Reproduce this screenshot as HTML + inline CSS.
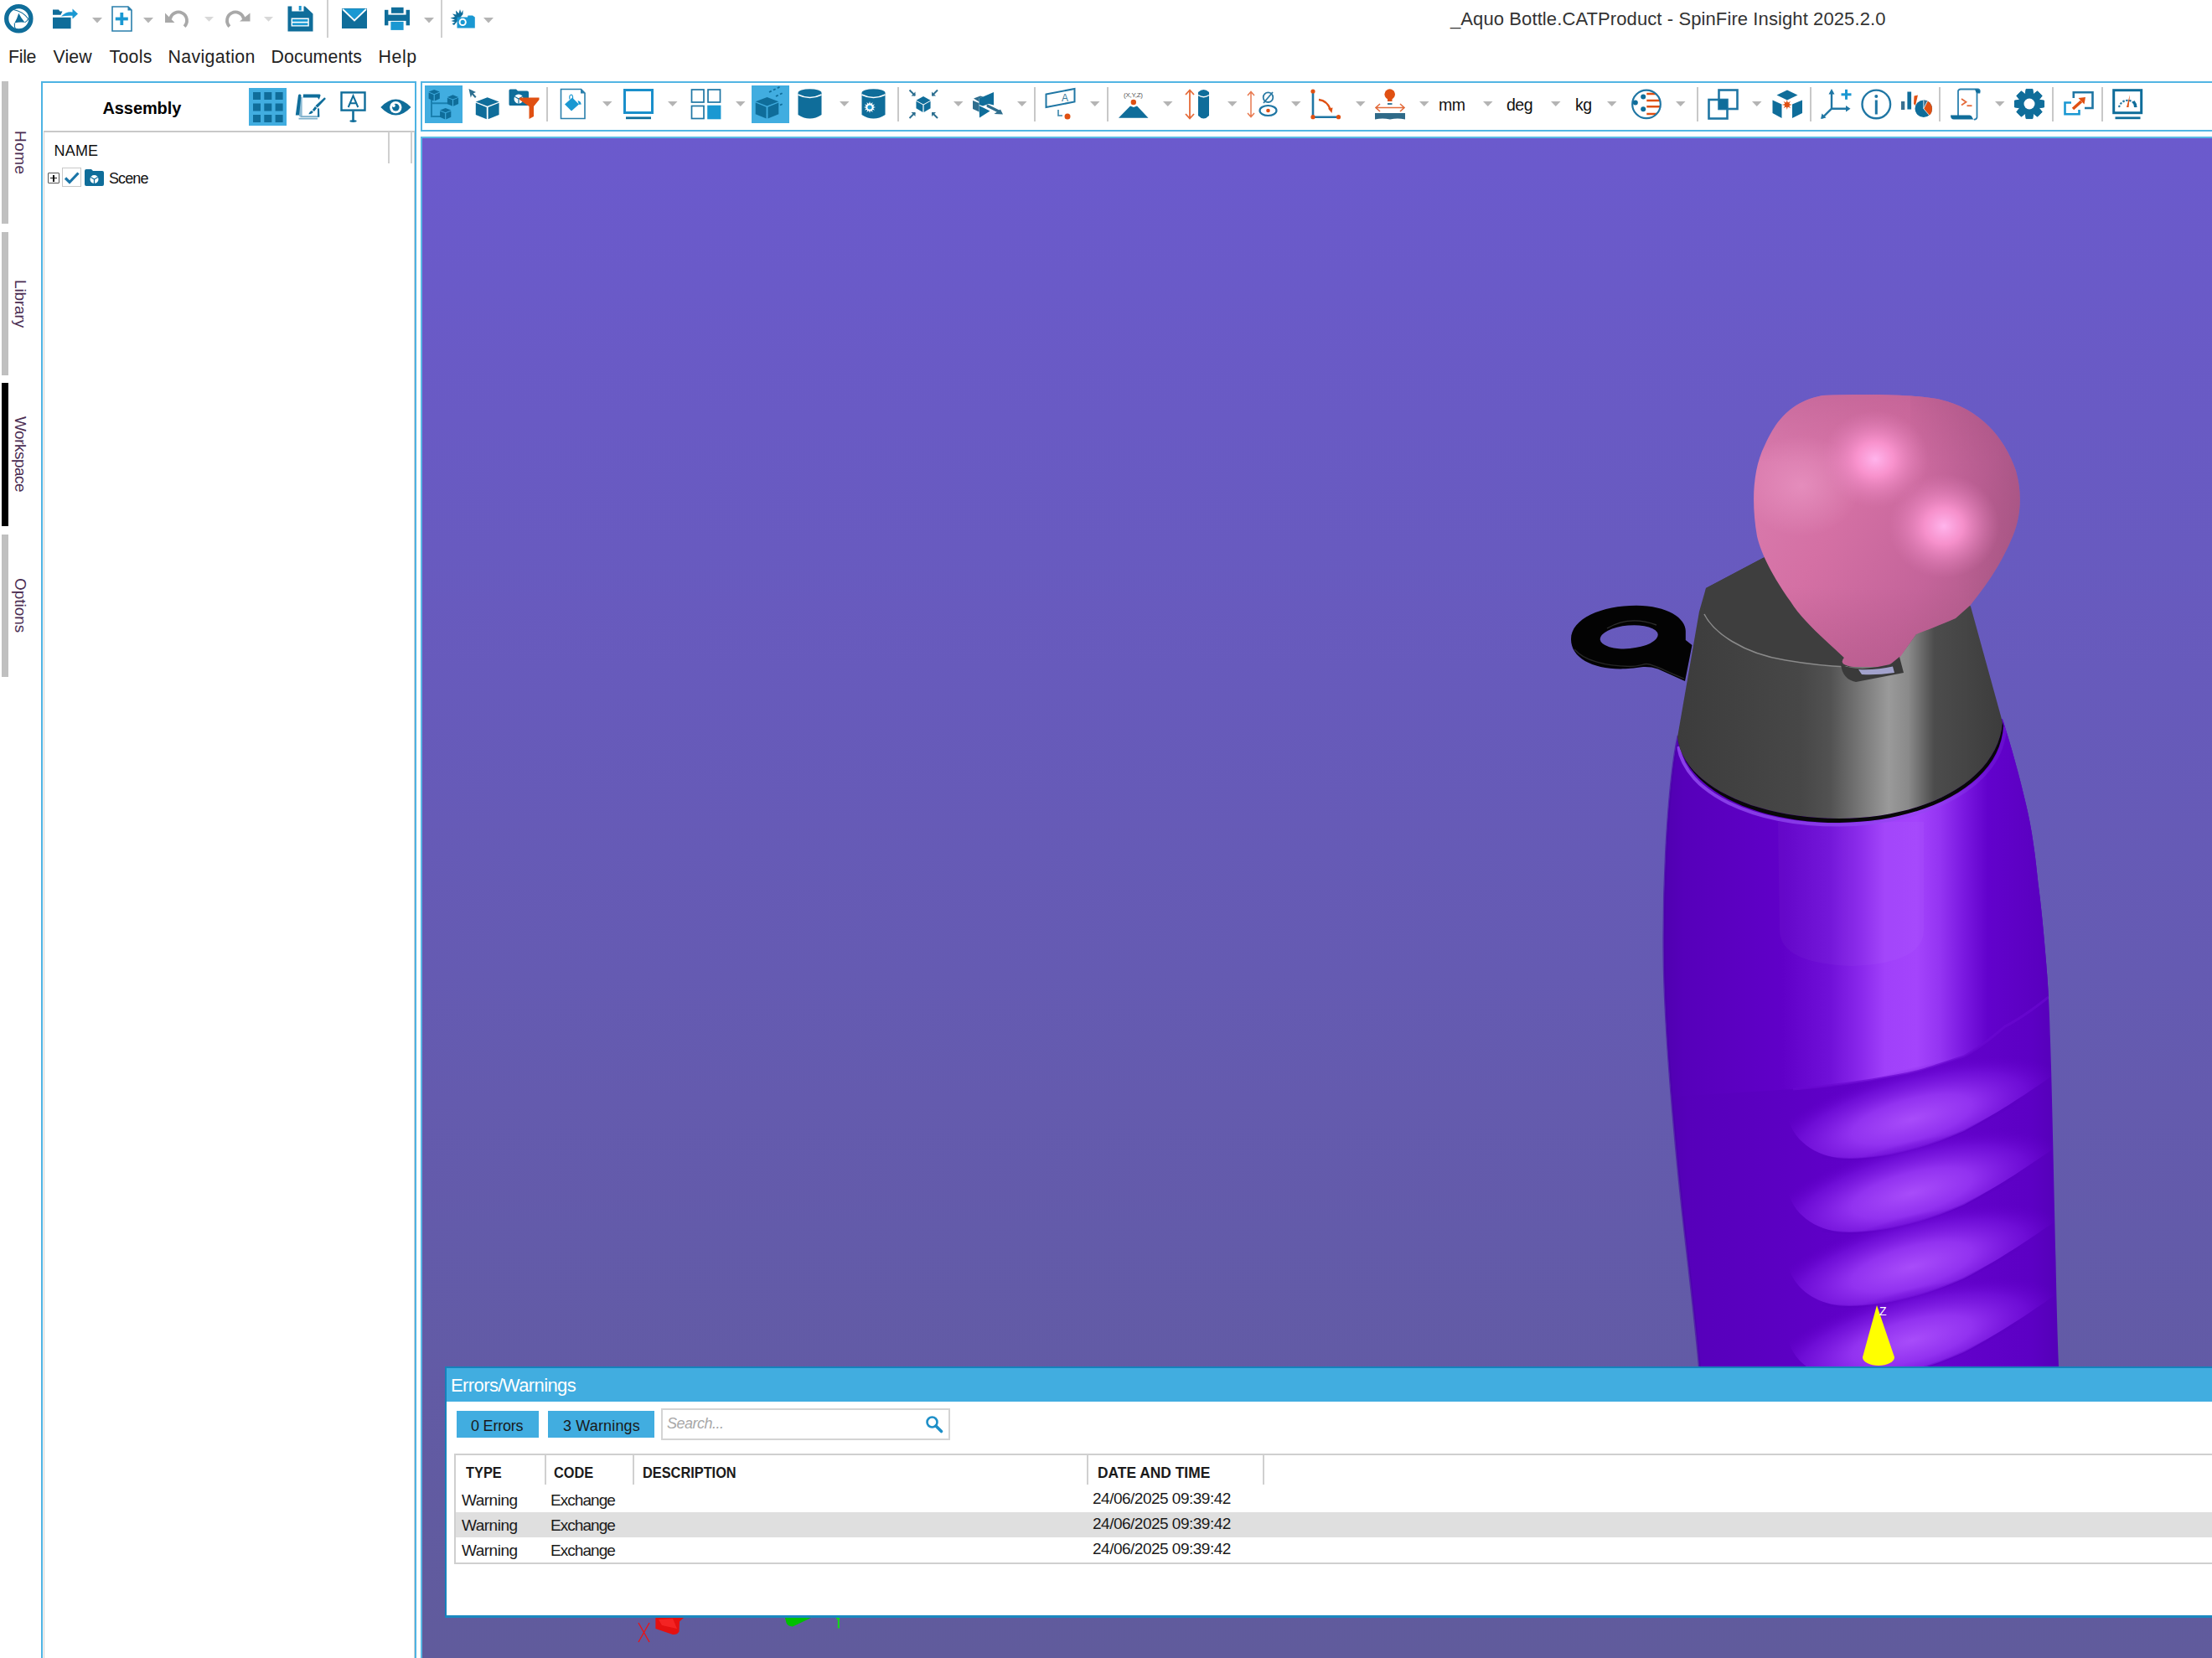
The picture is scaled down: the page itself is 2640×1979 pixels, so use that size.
<!DOCTYPE html>
<html><head><meta charset="utf-8">
<style>
*{margin:0;padding:0;box-sizing:border-box}
html,body{width:2640px;height:1979px;overflow:hidden;background:#fff;font-family:"Liberation Sans",sans-serif;color:#1a1a1a}
.a{position:absolute}
svg{overflow:visible}
.menu{font-size:21px;top:56px;line-height:24px;color:#111}
.title{font-size:22px;left:1732px;top:8px;line-height:30px;color:#333}
.tab{left:2px;width:8px;background:#c0c0c0}
.tabt{font-size:18px;color:#3a1030;transform-origin:0 0;transform:rotate(90deg);white-space:nowrap;line-height:20px}
#panel{left:49px;top:97px;width:448px;height:1900px;border:2px solid #4db3e3;border-bottom:none}
#tb{left:502px;top:97px;width:2200px;height:60px;border:2px solid #52b5e3;border-right:none}
#vp{left:502px;top:163px;width:2200px;height:1816px;border:2px solid #5ab8e4;border-right:none;border-bottom:none;background:linear-gradient(#6b5acd,#605b9c)}
#err{left:531px;top:1631px;width:2200px;height:300px;background:#fff;border-left:2px solid #1582bb;border-top:2px solid #1582bb;border-bottom:3px solid #1a88c0}
#errt{left:0;top:0;width:100%;height:40px;background:#41ade0}
.btn{background:#41ade0;color:#111;font-size:19px;text-align:center;line-height:32px;height:32px}
.t{line-height:1;white-space:nowrap;color:#1a1a1a}
.th{font-size:19px;color:#111;top:1752px;line-height:20px}
.td{font-size:18px;color:#111;line-height:20px}
</style></head><body>

<!-- quick access toolbar -->
<svg class="a" style="left:4px;top:4px" width="37" height="37" viewBox="0 0 37 37">
<circle cx="18.3" cy="18.2" r="14.6" fill="none" stroke="#0f6d9a" stroke-width="5.3"/>
<path d="M18.3 11.8 Q16.2 19 13.3 23.6 Q19.5 21.8 25.6 22.8 Q21 17.5 18.3 11.8 Z" fill="#0f6d9a"/>
<path d="M12.1 7.5 Q23 9.5 29.8 18.5" fill="none" stroke="#0f6d9a" stroke-width="1.1"/>
<path d="M25.6 22.8 Q28.5 21.5 30 18" fill="none" stroke="#0f6d9a" stroke-width="1.1"/>
<path d="M13.3 23.6 Q13 28 14.5 30.5" fill="none" stroke="#0f6d9a" stroke-width="1.1"/>
</svg>
<svg class="a" style="left:62px;top:9px" width="33" height="27" viewBox="0 0 33 27">
<path d="M1 2.5 L8 2.5 L9.5 4.5 L12.5 4.5 L10.5 8.8 L1 8.8 Z" fill="#0f6d9a"/>
<rect x="1" y="11.8" width="21.6" height="13.4" fill="#0f6d9a"/>
<path d="M11 10.5 Q17 4.5 24.5 5.5 L24.5 1.5 L31 7.5 L24.5 13.5 L24.5 9.8 Q17 9.5 11 10.5 Z" fill="#1a98d2"/>
</svg>
<svg class="a" style="left:109.5px;top:20.8px" width="12" height="6.5" viewBox="0 0 12 6.5"><path d="M0 0 L12 0 L6.0 6.5 Z" fill="#b4b4b4"/></svg>
<svg class="a" style="left:133px;top:7px" width="25" height="31" viewBox="0 0 25 31">
<path d="M1 1 L20 1 L24 5 L24 30 L1 30 Z" fill="none" stroke="#2a7fac" stroke-width="1.6"/>
<path d="M19.5 0.5 L24.5 5.5 L19.5 5.5 Z" fill="#2a7fac"/>
<rect x="10.4" y="8" width="3.8" height="15" fill="#1a98d2"/><rect x="4.8" y="13.6" width="15" height="3.8" fill="#1a98d2"/>
</svg>
<svg class="a" style="left:171px;top:20.8px" width="12" height="6.5" viewBox="0 0 12 6.5"><path d="M0 0 L12 0 L6.0 6.5 Z" fill="#b4b4b4"/></svg>
<svg class="a" style="left:195px;top:11px;overflow:visible" width="32" height="23" viewBox="0 0 32 23">
<path d="M8.15 11.76 A10 10 0 1 1 25.07 20.57" fill="none" stroke="#a8a8a8" stroke-width="3.8"/>
<path d="M2 4.5 L2 16 L13.5 16 Z" fill="#a8a8a8"/>
</svg>
<svg class="a" style="left:243.5px;top:19.8px" width="11" height="5.8" viewBox="0 0 11 5.8"><path d="M0 0 L11 0 L5.5 5.8 Z" fill="#d8d8d8"/></svg>
<svg class="a" style="left:268px;top:11px;overflow:visible" width="32" height="23" viewBox="0 0 32 23">
<path d="M5.93 20.57 A10 10 0 1 1 22.85 11.76" fill="none" stroke="#a8a8a8" stroke-width="3.8"/>
<path d="M30.5 4.5 L30.5 14.5 L18 14.5 Z" fill="#a8a8a8"/>
</svg>
<svg class="a" style="left:315px;top:19.8px" width="11" height="5.8" viewBox="0 0 11 5.8"><path d="M0 0 L11 0 L5.5 5.8 Z" fill="#d8d8d8"/></svg>
<svg class="a" style="left:343px;top:7px" width="31" height="31" viewBox="0 0 31 31">
<path d="M0.5 0.5 L21 0.5 L30.5 9.5 L30.5 30.5 L0.5 30.5 Z" fill="#0f6d9a"/>
<rect x="5.3" y="0" width="14.2" height="6.5" fill="#fff"/><rect x="13.7" y="0" width="3" height="5.5" fill="#1a98d2"/>
<rect x="4.6" y="14.5" width="21.2" height="10" fill="#fff"/>
<rect x="6" y="16" width="18.4" height="2.8" fill="#1a98d2"/><rect x="6" y="20.4" width="18.4" height="2.8" fill="#1a98d2"/>
</svg>
<div class="a" style="left:390px;top:0;width:2px;height:45px;background:#cfcfcf"></div>
<svg class="a" style="left:408px;top:10px" width="30" height="25" viewBox="0 0 30 25">
<path d="M0 1 Q0 0 1 0 L29 0 Q30 0 30 1 L30 24 L0 24 Z" fill="#0f6d9a"/>
<path d="M0.5 0.5 L29.5 0.5 L15 14.5 Z" fill="#1a98d2"/>
<path d="M1 1 L15 14.5 L29 1" fill="none" stroke="#fff" stroke-width="1.8"/>
</svg>
<svg class="a" style="left:459px;top:8px" width="31" height="29" viewBox="0 0 31 29">
<rect x="8" y="0.8" width="14.6" height="7" fill="#0f6d9a"/>
<rect x="0" y="9.6" width="30" height="7.3" fill="#0f6d9a"/>
<rect x="0" y="3.8" width="4.4" height="18.5" fill="#0f6d9a"/><rect x="25.6" y="3.8" width="4.4" height="18.5" fill="#0f6d9a"/>
<rect x="7.4" y="17.9" width="15.2" height="10" fill="#1a98d2"/>
</svg>
<svg class="a" style="left:505.7px;top:20.6px" width="12" height="6.4" viewBox="0 0 12 6.4"><path d="M0 0 L12 0 L6.0 6.4 Z" fill="#b4b4b4"/></svg>
<div class="a" style="left:526px;top:0;width:2px;height:45px;background:#cfcfcf"></div>
<svg class="a" style="left:537px;top:11px" width="31" height="23" viewBox="0 0 31 23">
<path d="M5 19 L2.5 17.5 L6 15.5 L1.5 14 L6 12.5 L0.5 10.5 L6 9 L3 5.5 L7.5 6.5 L7 1.5 L10.5 5 L12 0 L13.5 4.5 L15.5 1 L15.5 6 Z" fill="#0f6d9a"/>
<path d="M8.5 9.5 L21 9.5 L21.5 7.5 L27 7.5 L29.8 9.5 L29.8 22.5 L8.5 22.5 Z" fill="#1a98d2"/>
<circle cx="15.2" cy="15.4" r="4.6" fill="#fff"/><circle cx="15.2" cy="15.4" r="2.6" fill="#1a98d2"/>
</svg>
<svg class="a" style="left:577.4px;top:20.6px" width="12" height="6.4" viewBox="0 0 12 6.4"><path d="M0 0 L12 0 L6.0 6.4 Z" fill="#b4b4b4"/></svg>
<div class="a t" style="left:1731px;top:12.4px;font-size:22px;color:#333;letter-spacing:0.1px">_Aquo Bottle.CATProduct - SpinFire Insight 2025.2.0</div>

<!-- menu -->
<div class="a t" style="left:10px;top:58.0px;font-size:21.3px;letter-spacing:-0.3px;color:#222">File</div>
<div class="a t" style="left:63.5px;top:58.0px;font-size:21.3px;letter-spacing:0.1px;color:#222">View</div>
<div class="a t" style="left:130.5px;top:58.0px;font-size:21.3px;letter-spacing:0.3px;color:#222">Tools</div>
<div class="a t" style="left:200.5px;top:58.0px;font-size:21.3px;letter-spacing:0.35px;color:#222">Navigation</div>
<div class="a t" style="left:323.5px;top:58.0px;font-size:21.3px;letter-spacing:0.1px;color:#222">Documents</div>
<div class="a t" style="left:451.5px;top:58.0px;font-size:21.3px;letter-spacing:0.6px;color:#222">Help</div>
<!-- side tabs -->
<div class="a tab" style="top:97px;height:170px"></div>
<div class="a tab" style="top:277px;height:171px"></div>
<div class="a tab" style="top:457px;height:171px;background:#000"></div>
<div class="a tab" style="top:638px;height:170px"></div>
<div class="a t" style="left:34.1px;top:156px;font-size:19px;letter-spacing:0.43px;color:#4a2c52;transform:rotate(90deg);transform-origin:0 0">Home</div>
<div class="a t" style="left:34.1px;top:333.5px;font-size:19px;letter-spacing:-0.15px;color:#4a2c52;transform:rotate(90deg);transform-origin:0 0">Library</div>
<div class="a t" style="left:34.1px;top:497px;font-size:19px;letter-spacing:-0.5px;color:#4a2c52;transform:rotate(90deg);transform-origin:0 0">Workspace</div>
<div class="a t" style="left:34.1px;top:690px;font-size:19px;letter-spacing:-0.05px;color:#4a2c52;transform:rotate(90deg);transform-origin:0 0">Options</div>
<!-- left panel -->
<div class="a" id="panel"></div>
<div class="a t" style="left:122.5px;top:119.1px;font-size:20px;font-weight:bold;color:#000;letter-spacing:-0.1px">Assembly</div>
<div class="a" style="left:297px;top:105px;width:45px;height:45px;background:#41ade0"></div>
<svg class="a" style="left:301.5px;top:109.5px" width="36" height="36" viewBox="0 0 36 36" fill="#0f6d9a"><rect x="0" y="0" width="9" height="9"/><rect x="0" y="13.5" width="9" height="9"/><rect x="0" y="27" width="9" height="9"/><rect x="13.3" y="0" width="9" height="9"/><rect x="13.3" y="13.5" width="9" height="9"/><rect x="13.3" y="27" width="9" height="9"/><rect x="26.6" y="0" width="9" height="9"/><rect x="26.6" y="13.5" width="9" height="9"/><rect x="26.6" y="27" width="9" height="9"/></svg>
<svg class="a" style="left:348px;top:106px" width="46" height="42" viewBox="0 0 46 42">
<path d="M9 10 L12.7 10 L12.7 33 L9 33 Z" fill="#8fbcd4"/>
<path d="M10.5 32.2 L33 32.2 L33 34 L10.5 34 Z" fill="#7eb0cb"/>
<path d="M8.5 34.7 L31 34.7 L31 36.5 L8.5 36.5 Z" fill="#7eb0cb"/>
<path d="M9 6.6 Q11 6.2 11.5 8 L9 31.5 L4.8 31.5 L7.8 9 Q8 7 9 6.6 Z" fill="#0f6d9a"/>
<path d="M14 6.6 L33.5 6.6 Q35 7 34.4 8.5 L32.8 13 L31 10.6 L13.7 10.6 Z" fill="#0f6d9a"/>
<path d="M31 23.3 L33 23.5 L33.4 33.4 L31 33.4 Z" fill="#0f6d9a"/>
<path d="M39 10.5 Q41 10.3 40.6 12.3 L31 22.5 L28.4 20.2 Z" fill="#0f6d9a"/>
<path d="M28 21 L30.3 23 L27 27 L24.8 25.2 Z" fill="#0f6d9a"/>
<path d="M24 26 L25.8 27.6 Q24.5 30.5 20.3 30.2 Q21.5 26.8 24 26 Z" fill="#0f6d9a"/>
</svg>
<svg class="a" style="left:406px;top:109px" width="31" height="37" viewBox="0 0 31 37">
<rect x="1.5" y="1.4" width="28" height="21.2" fill="none" stroke="#0f6d9a" stroke-width="2.4"/>
<path d="M9.7 19 L15.5 5.4 L21.3 19 M12 14.2 L19 14.2" fill="none" stroke="#0f6d9a" stroke-width="2"/>
<rect x="14.2" y="23.5" width="2.6" height="11.5" fill="#0f6d9a"/><ellipse cx="15.5" cy="35.6" rx="4.2" ry="1.3" fill="#0f6d9a"/>
</svg>
<svg class="a" style="left:454px;top:118px" width="37" height="20" viewBox="0 0 37 20">
<path d="M0.3 10 Q18.3 -9 36.5 10 Q18.3 29 0.3 10 Z" fill="#0f6d9a"/>
<circle cx="18.3" cy="10.1" r="7.2" fill="#fff"/><circle cx="18.3" cy="10.1" r="4.3" fill="#0f6d9a"/>
<circle cx="15.9" cy="8" r="1.9" fill="#fff"/>
</svg>
<div class="a" style="left:52px;top:156px;width:443px;height:1830px;border-top:2px solid #c8c8c8;border-left:1px solid #d0d0d0;border-right:1px solid #d0d0d0"></div>
<div class="a" style="left:463px;top:157px;width:2px;height:38px;background:#cfcfcf"></div>
<div class="a" style="left:490px;top:157px;width:2px;height:38px;background:#cfcfcf"></div>
<div class="a t" style="left:64.5px;top:171.3px;font-size:18px;color:#111;letter-spacing:0.2px">NAME</div>
<div class="a" style="left:57px;top:206px;width:14px;height:13px;border:1px solid #555;border-radius:1px"></div>
<div class="a" style="left:60px;top:211.5px;width:8px;height:1.5px;background:#111"></div>
<div class="a" style="left:63.3px;top:208.5px;width:1.5px;height:8px;background:#111"></div>
<div class="a" style="left:74px;top:200px;width:23px;height:23px;border:1px solid #c8c8c8"></div>
<svg class="a" style="left:76px;top:204px" width="19" height="16" viewBox="0 0 19 16"><path d="M2 8.5 L7 13.5 L17.5 2.5" fill="none" stroke="#1a75a8" stroke-width="3.2"/></svg>
<svg class="a" style="left:100px;top:201px" width="25" height="22" viewBox="0 0 25 22">
<path d="M1 3 Q1 1 3 1 L9 1 L11 3 L22 3 Q24 3 24 5 L24 19 Q24 21 22 21 L3 21 Q1 21 1 19 Z" fill="#0f6d9a"/>
<circle cx="12.5" cy="13" r="5" fill="#fff"/>
<path d="M12.5 13 L12.5 18 M12.5 13 L8.3 10.5 M12.5 13 L16.7 10.5" stroke="#0f6d9a" stroke-width="1.3"/>
</svg>
<div class="a t" style="left:130px;top:203.8px;font-size:18px;color:#111;letter-spacing:-0.9px">Scene</div>

<!-- toolbar -->
<div class="a" id="tb"></div>
<div class="a" style="left:507px;top:102px;width:45px;height:45px;background:#41ade0"></div>
<svg class="a" style="left:507px;top:102px" width="45" height="45" viewBox="0 0 45 45"><path d="M8 16 L8 37 L22 37 M8 21.2 L30 21.2" fill="none" stroke="#1a80b0" stroke-width="2"/><path d="M11.2 4.9 L17.799999999999997 7.6000000000000005 L11.2 10.3 L4.6 7.6000000000000005 Z" fill="#0f6d9a"/><path d="M4.6 8.4 L10.639999999999999 11.020000000000001 L10.639999999999999 18.5 L4.6 15.8 Z" fill="#0f6d9a"/><path d="M17.799999999999997 8.4 L11.76 11.020000000000001 L11.76 18.5 L17.799999999999997 15.8 Z" fill="#0f6d9a"/><path d="M33.5 11.200000000000001 L40.1 13.900000000000002 L33.5 16.6 L26.9 13.900000000000002 Z" fill="#0f6d9a"/><path d="M26.9 14.700000000000003 L32.94 17.32 L32.94 24.8 L26.9 22.1 Z" fill="#0f6d9a"/><path d="M40.1 14.700000000000003 L34.06 17.32 L34.06 24.8 L40.1 22.1 Z" fill="#0f6d9a"/><path d="M24.7 26.9 L31.299999999999997 29.599999999999998 L24.7 32.3 L18.1 29.599999999999998 Z" fill="#0f6d9a"/><path d="M18.1 30.4 L24.14 33.019999999999996 L24.14 40.5 L18.1 37.8 Z" fill="#0f6d9a"/><path d="M31.299999999999997 30.4 L25.259999999999998 33.019999999999996 L25.259999999999998 40.5 L31.299999999999997 37.8 Z" fill="#0f6d9a"/></svg>
<svg class="a" style="left:557px;top:104px" width="42" height="42" viewBox="0 0 42 42"><path d="M2.5 2 L11 6 L7.8 7.5 L11.5 11.5 L10 13 L6.3 9 L4.8 12.5 Z" fill="#2d6f90"/><path d="M24.7 12.200000000000001 L38.6 17.5 L24.7 22.8 L10.799999999999999 17.5 Z" fill="#0f6d9a"/><path d="M10.799999999999999 18.8 L23.79 23.970000000000002 L23.79 38.3 L10.799999999999999 33.0 Z" fill="#0f6d9a"/><path d="M38.6 18.8 L25.61 23.970000000000002 L25.61 38.3 L38.6 33.0 Z" fill="#0f6d9a"/></svg>
<svg class="a" style="left:606px;top:105px" width="40" height="40" viewBox="0 0 40 40"><path d="M1.5 3 Q1.5 1.5 3 1.5 L10 1.5 L12 3.5 L23 3.5 Q25 3.5 25 5.5 L25 19.5 Q25 21 23.5 21 L3 21 Q1.5 21 1.5 19.5 Z" fill="#0f6d9a"/><circle cx="13" cy="13" r="5.5" fill="#fff"/><path d="M13 13 L13 18.5 M13 13 L8.3 10.3 M13 13 L17.7 10.3" stroke="#0f6d9a" stroke-width="1.2"/><path d="M14 11.5 L37.5 11.5 L37.5 14 L31 22 L31 34 L25.5 37 L25.5 22 L14 14 Z" fill="#e05012"/></svg>
<div class="a" style="left:652px;top:104px;width:2px;height:41px;background:#c8c8c8"></div>
<svg class="a" style="left:668px;top:105px" width="32" height="38" viewBox="0 0 32 38"><path d="M1.5 1.5 L25.5 1.5 L30 6 L30 36.5 L1.5 36.5 Z" fill="none" stroke="#2a7fac" stroke-width="1.6"/><path d="M25 1 L30.5 6.5 L25 6.5 Z" fill="#2a7fac"/><path d="M6 19.5 L15 11.5 L23 19.5 L14 27.5 Z" fill="#1a98d2"/><path d="M12 13.5 Q11 8 14 8 Q16 9 15.5 13" fill="none" stroke="#1a98d2" stroke-width="1.2"/><path d="M21.5 15 Q26 16 25.5 20 Q24 19 23 20 Z" fill="#1a98d2"/></svg>
<svg class="a" style="left:718.6px;top:121.4px" width="11.5" height="6" viewBox="0 0 11.5 6"><path d="M0 0 L11.5 0 L5.75 6 Z" fill="#b4b4b4"/></svg>
<svg class="a" style="left:744px;top:106px" width="37" height="37" viewBox="0 0 37 37"><rect x="1.5" y="1.5" width="33" height="27" fill="none" stroke="#1a8fcb" stroke-width="3"/><rect x="3" y="33.4" width="30" height="2.8" fill="#0f6d9a"/></svg>
<svg class="a" style="left:797px;top:121.4px" width="11.5" height="6" viewBox="0 0 11.5 6"><path d="M0 0 L11.5 0 L5.75 6 Z" fill="#b4b4b4"/></svg>
<svg class="a" style="left:824px;top:106px" width="38" height="38" viewBox="0 0 38 38"><rect x="1.5" y="1" width="14.5" height="15" fill="none" stroke="#1f76a4" stroke-width="1.7"/><rect x="21" y="1" width="14.5" height="15" fill="none" stroke="#1f76a4" stroke-width="1.7"/><rect x="1.5" y="20.5" width="14.5" height="15" fill="none" stroke="#1f76a4" stroke-width="1.7"/><rect x="20.2" y="19.7" width="16.2" height="16.6" fill="#1a98d2"/></svg>
<svg class="a" style="left:877.5px;top:121.4px" width="11.5" height="6" viewBox="0 0 11.5 6"><path d="M0 0 L11.5 0 L5.75 6 Z" fill="#b4b4b4"/></svg>
<div class="a" style="left:897px;top:102px;width:45px;height:45px;background:#41ade0"></div>
<svg class="a" style="left:897px;top:102px" width="45" height="45" viewBox="0 0 45 45"><path d="M18.5 14.1 L32.3 19.3 L18.5 24.5 L4.699999999999999 19.3 Z" fill="#0f6d9a"/><path d="M4.699999999999999 20.6 L17.59 25.67 L17.59 39.5 L4.699999999999999 34.3 Z" fill="#0f6d9a"/><path d="M32.3 20.6 L19.41 25.67 L19.41 39.5 L32.3 34.3 Z" fill="#0f6d9a"/><path d="M21 8 L34 1.5 M29 13 L38 8.5 M29 26 L37 22" stroke="#0f6d9a" stroke-width="1.8" stroke-dasharray="3 2.5"/></svg>
<svg class="a" style="left:952px;top:106px" width="30" height="37" viewBox="0 0 30 37"><path d="M0.5 5 L0.5 31 Q14.5 40 28.5 31 L28.5 5 Z" fill="#0f6d9a"/><ellipse cx="14.5" cy="4.5" rx="14" ry="4.3" fill="#0f6d9a"/><path d="M0.5 7 Q14.5 14 28.5 7" fill="none" stroke="#fff" stroke-width="1.5"/></svg>
<svg class="a" style="left:1002px;top:121.4px" width="11.5" height="6" viewBox="0 0 11.5 6"><path d="M0 0 L11.5 0 L5.75 6 Z" fill="#b4b4b4"/></svg>
<svg class="a" style="left:1028px;top:106px" width="30" height="37" viewBox="0 0 30 37"><path d="M0.5 5 L0.5 31 Q14.5 40 28.5 31 L28.5 5 Z" fill="#0f6d9a"/><ellipse cx="14.5" cy="4.5" rx="14" ry="4.3" fill="#0f6d9a"/><path d="M0.5 7 Q14.5 14 28.5 7" fill="none" stroke="#fff" stroke-width="1.5"/><path d="M17.00 22.00 L13.86 23.04 L13.86 20.96 Z" fill="#fff"/><path d="M16.06 25.50 L12.83 24.83 L13.86 23.04 Z" fill="#fff"/><path d="M13.50 28.06 L11.04 25.86 L12.83 24.83 Z" fill="#fff"/><path d="M10.00 29.00 L8.96 25.86 L11.04 25.86 Z" fill="#fff"/><path d="M6.50 28.06 L7.17 24.83 L8.96 25.86 Z" fill="#fff"/><path d="M3.94 25.50 L6.14 23.04 L7.17 24.83 Z" fill="#fff"/><path d="M3.00 22.00 L6.14 20.96 L6.14 23.04 Z" fill="#fff"/><path d="M3.94 18.50 L7.17 19.17 L6.14 20.96 Z" fill="#fff"/><path d="M6.50 15.94 L8.96 18.14 L7.17 19.17 Z" fill="#fff"/><path d="M10.00 15.00 L11.04 18.14 L8.96 18.14 Z" fill="#fff"/><path d="M13.50 15.94 L12.83 19.17 L11.04 18.14 Z" fill="#fff"/><path d="M16.06 18.50 L13.86 20.96 L12.83 19.17 Z" fill="#fff"/><circle cx="10" cy="22" r="4.6" fill="#fff"/><circle cx="10" cy="22" r="2.6" fill="#1a98d2"/></svg>
<div class="a" style="left:1071px;top:104px;width:2px;height:41px;background:#c8c8c8"></div>
<svg class="a" style="left:1084px;top:106px" width="37" height="37" viewBox="0 0 37 37"><path d="M18 9.0 L26.55 13.75 L18 18.5 L9.45 13.75 Z" fill="#0f6d9a"/><path d="M9.45 14.75 L17.4 19.3 L17.4 28.0 L9.45 23.25 Z" fill="#0f6d9a"/><path d="M26.55 14.75 L18.6 19.3 L18.6 28.0 L26.55 23.25 Z" fill="#0f6d9a"/><path d="M1.5 1.5 L8 8 M35 1.5 L28.5 8 M1.5 35 L8 28.5 M35 35 L28.5 28.5" stroke="#2d6f90" stroke-width="2"/><path d="M8.5 3.5 L8.5 8.5 L3.5 8.5 Z M28 3.5 L28 8.5 L33 8.5 Z M8.5 33 L8.5 28 L3.5 28 Z M28 33 L28 28 L33 28 Z" fill="#2d6f90"/></svg>
<svg class="a" style="left:1137.5px;top:121.4px" width="11.5" height="6" viewBox="0 0 11.5 6"><path d="M0 0 L11.5 0 L5.75 6 Z" fill="#b4b4b4"/></svg>
<svg class="a" style="left:1155px;top:100px" width="50" height="48" viewBox="0 0 50 48">
<path d="M6 20 L13.5 23 L13.5 33.5 L6 30 Z" fill="#2f6e8e"/>
<path d="M7 17.5 L15 14.5 L18.5 15.5 L13.5 17.5 L13.5 21.5 Z" fill="#2f6e8e"/>
<path d="M13.5 17.5 L31 10 L31 25.5 L25 24 L18 26.5 L13.5 25 Z" fill="#0f6d9a"/>
<path d="M13.5 26 L26.5 32.5 L14 40.5 Z" fill="#0f6d9a"/>
<path d="M24 26.5 L38 33.5" stroke="#2f6e8e" stroke-width="3.2" stroke-linecap="round"/>
<path d="M39 30.5 L42 36.5 L31.5 36 Z" fill="#2f6e8e"/>
</svg>
<svg class="a" style="left:1214px;top:121.4px" width="11.5" height="6" viewBox="0 0 11.5 6"><path d="M0 0 L11.5 0 L5.75 6 Z" fill="#b4b4b4"/></svg>
<div class="a" style="left:1234px;top:104px;width:2px;height:41px;background:#c8c8c8"></div>
<svg class="a" style="left:1246px;top:105px" width="40" height="38" viewBox="0 0 40 38"><path d="M2.5 7.5 L36.5 1 L36.5 16.5 L2.5 23 Z" fill="none" stroke="#1f76a4" stroke-width="2"/><text x="21" y="16" font-family="Liberation Sans" font-size="12" fill="#3a7a9a">A</text><path d="M17 26 L17 33 L22 33" fill="none" stroke="#3a85ab" stroke-width="1.6"/><circle cx="28" cy="34" r="3.5" fill="#e05012"/></svg>
<svg class="a" style="left:1301px;top:121.4px" width="11.5" height="6" viewBox="0 0 11.5 6"><path d="M0 0 L11.5 0 L5.75 6 Z" fill="#b4b4b4"/></svg>
<div class="a" style="left:1321px;top:104px;width:2px;height:41px;background:#c8c8c8"></div>
<svg class="a" style="left:1334px;top:108px" width="38" height="34" viewBox="0 0 38 34"><text x="7" y="8" font-family="Liberation Sans" font-size="8" fill="#555" textLength="23">(X,Y,Z)</text><circle cx="18.8" cy="14" r="3.2" fill="#e05012"/><path d="M1 32.8 L15 18.5 L19 20 L23 18.5 L36.5 32.8 Z" fill="#0f6d9a"/></svg>
<svg class="a" style="left:1388px;top:121.4px" width="11.5" height="6" viewBox="0 0 11.5 6"><path d="M0 0 L11.5 0 L5.75 6 Z" fill="#b4b4b4"/></svg>
<svg class="a" style="left:1413px;top:105px" width="32" height="39" viewBox="0 0 32 39"><path d="M7 3 L7 36 M2 8 L7 2.5 L12 8 M2 31 L7 36.5 L12 31" fill="none" stroke="#e56a38" stroke-width="1.8"/><path d="M17 5 Q23.5 -1 30 5 L30 33 Q23.5 40 17 33 Z" fill="#0f6d9a"/><path d="M17 8.5 Q23.5 13 30 8.5" fill="none" stroke="#fff" stroke-width="1.3"/></svg>
<svg class="a" style="left:1464.5px;top:121.4px" width="11.5" height="6" viewBox="0 0 11.5 6"><path d="M0 0 L11.5 0 L5.75 6 Z" fill="#b4b4b4"/></svg>
<svg class="a" style="left:1487px;top:108px" width="38" height="33" viewBox="0 0 38 33"><path d="M6 2 L6 31 M2 6 L6 1.5 L10 6 M2 27 L6 31.5 L10 27" fill="none" stroke="#e87a50" stroke-width="1.5"/><circle cx="26.5" cy="8.2" r="5.8" fill="none" stroke="#2a7aa4" stroke-width="1.8"/><path d="M21 15 L32 2" stroke="#2a7aa4" stroke-width="1.8"/><ellipse cx="26.5" cy="24" rx="10" ry="6" fill="none" stroke="#1f76a4" stroke-width="2.2"/><circle cx="26.5" cy="24" r="2.3" fill="#e05012"/></svg>
<svg class="a" style="left:1541px;top:121.4px" width="11.5" height="6" viewBox="0 0 11.5 6"><path d="M0 0 L11.5 0 L5.75 6 Z" fill="#b4b4b4"/></svg>
<svg class="a" style="left:1562px;top:106px" width="40" height="38" viewBox="0 0 40 38"><path d="M5 3 L5 33.7 L35.5 33.7" fill="none" stroke="#1f76a4" stroke-width="2.6"/><circle cx="5" cy="3" r="2.6" fill="#e05012"/><circle cx="5" cy="33.7" r="2.6" fill="#e05012"/><circle cx="35.5" cy="33.7" r="2.6" fill="#e05012"/><path d="M12 13 Q22 14 26 25" fill="none" stroke="#e05012" stroke-width="2.4"/><path d="M23 23.5 L28.5 22.5 L27.5 29 Z" fill="#e05012"/></svg>
<svg class="a" style="left:1617.5px;top:121.4px" width="11.5" height="6" viewBox="0 0 11.5 6"><path d="M0 0 L11.5 0 L5.75 6 Z" fill="#b4b4b4"/></svg>
<svg class="a" style="left:1640px;top:105px" width="38" height="39" viewBox="0 0 38 39"><circle cx="18.7" cy="7.6" r="6.3" fill="#e05012"/><rect x="16" y="10" width="5.5" height="6" fill="#e05012"/><rect x="16" y="18" width="5.5" height="2" fill="#3a7a9a"/><path d="M2.5 23.5 L35.5 23.5 M7 19 L2 23.5 L7 28 M31 19 L36 23.5 L31 28" fill="none" stroke="#e26a3a" stroke-width="1.6"/><path d="M1 30 L37 30 L37 37.5 Q28 35.5 19 37.5 Q10 35.5 1 37.5 Z" fill="#2f6a88"/></svg>
<svg class="a" style="left:1694px;top:121.4px" width="11.5" height="6" viewBox="0 0 11.5 6"><path d="M0 0 L11.5 0 L5.75 6 Z" fill="#b4b4b4"/></svg>
<div class="a t" style="left:1717px;top:115.5px;font-size:19.5px;color:#111;letter-spacing:-0.5px">mm</div>
<svg class="a" style="left:1770px;top:121.4px" width="11.5" height="6" viewBox="0 0 11.5 6"><path d="M0 0 L11.5 0 L5.75 6 Z" fill="#b4b4b4"/></svg>
<div class="a t" style="left:1798px;top:115.5px;font-size:19.5px;color:#111;letter-spacing:-0.5px">deg</div>
<svg class="a" style="left:1851px;top:121.4px" width="11.5" height="6" viewBox="0 0 11.5 6"><path d="M0 0 L11.5 0 L5.75 6 Z" fill="#b4b4b4"/></svg>
<div class="a t" style="left:1880px;top:115.5px;font-size:19.5px;color:#111;letter-spacing:-0.5px">kg</div>
<svg class="a" style="left:1917.5px;top:121.4px" width="11.5" height="6" viewBox="0 0 11.5 6"><path d="M0 0 L11.5 0 L5.75 6 Z" fill="#b4b4b4"/></svg>
<svg class="a" style="left:1946px;top:106px" width="38" height="38" viewBox="0 0 38 38"><defs><clipPath id="cc"><circle cx="19" cy="18.4" r="16.5"/></clipPath></defs><g clip-path="url(#cc)"><path d="M19.3 6 L40 6 M19.3 14 L40 14 M19.3 21.3 L40 21.3 M19.3 30 L40 30" stroke="#e05012" stroke-width="2.4"/></g><circle cx="19" cy="18.4" r="16.8" fill="none" stroke="#1f76a4" stroke-width="2.2"/><circle cx="15.2" cy="9.6" r="3" fill="#0f6d9a"/><circle cx="5.8" cy="16.6" r="3" fill="#0f6d9a"/><circle cx="15.2" cy="24.3" r="3" fill="#0f6d9a"/></svg>
<svg class="a" style="left:2000px;top:121.4px" width="11.5" height="6" viewBox="0 0 11.5 6"><path d="M0 0 L11.5 0 L5.75 6 Z" fill="#b4b4b4"/></svg>
<div class="a" style="left:2025px;top:104px;width:2px;height:41px;background:#c8c8c8"></div>
<svg class="a" style="left:2037px;top:105px" width="40" height="40" viewBox="0 0 40 40"><rect x="14.5" y="2.5" width="22" height="22.5" fill="none" stroke="#1f76a4" stroke-width="2.6"/><rect x="2.5" y="14" width="22" height="22.5" fill="none" stroke="#1f76a4" stroke-width="2.6"/><rect x="14.5" y="14" width="10" height="11" fill="#0f6d9a"/></svg>
<svg class="a" style="left:2091px;top:121.4px" width="11.5" height="6" viewBox="0 0 11.5 6"><path d="M0 0 L11.5 0 L5.75 6 Z" fill="#b4b4b4"/></svg>
<svg class="a" style="left:2115px;top:105px" width="37" height="37" viewBox="0 0 37 37"><path d="M5.5 8.5 L18 2.5 L30.5 8.5 L18 14.5 Z" fill="#0f6d9a"/><path d="M0.5 14.5 L11.5 19.5 L11.5 36 L0.5 30 Z" fill="#0f6d9a"/><path d="M36 14.5 L24 19.5 L24 36 L36 30 Z" fill="#0f6d9a"/><circle cx="17.8" cy="20" r="3" fill="#e05012"/><path d="M23.80 20.00 L20.11 20.96 L20.11 19.04 Z" fill="#e05012"/><path d="M22.04 24.24 L18.76 22.31 L20.11 20.96 Z" fill="#e05012"/><path d="M17.80 26.00 L16.84 22.31 L18.76 22.31 Z" fill="#e05012"/><path d="M13.56 24.24 L15.49 20.96 L16.84 22.31 Z" fill="#e05012"/><path d="M11.80 20.00 L15.49 19.04 L15.49 20.96 Z" fill="#e05012"/><path d="M13.56 15.76 L16.84 17.69 L15.49 19.04 Z" fill="#e05012"/><path d="M17.80 14.00 L18.76 17.69 L16.84 17.69 Z" fill="#e05012"/><path d="M22.04 15.76 L20.11 19.04 L18.76 17.69 Z" fill="#e05012"/></svg>
<div class="a" style="left:2160px;top:104px;width:2px;height:41px;background:#c8c8c8"></div>
<svg class="a" style="left:2172px;top:105px" width="37" height="38" viewBox="0 0 37 38"><path d="M14 5 L14 24.7 L34 24.7 M14 24.7 L2.5 36" fill="none" stroke="#1f76a4" stroke-width="2.4"/><path d="M10.5 7.5 L14 1 L17.5 7.5 Z M31 21 L36.5 24.7 L31 28.5 Z M1 37 L2.5 30.5 L7.5 35.5 Z" fill="#1f76a4"/><rect x="30" y="1.8" width="3" height="12" fill="#1a98d2"/><rect x="25.5" y="6.3" width="12" height="3" fill="#1a98d2"/></svg>
<svg class="a" style="left:2221px;top:106px" width="37" height="37" viewBox="0 0 37 37"><circle cx="18.3" cy="18.4" r="16.8" fill="none" stroke="#1f76a4" stroke-width="2.4"/><circle cx="18.3" cy="9" r="2" fill="#1f76a4"/><rect x="16.8" y="13.5" width="3" height="17" fill="#1f76a4"/></svg>
<svg class="a" style="left:2268px;top:108px" width="40" height="34" viewBox="0 0 40 34"><rect x="1" y="13" width="4.3" height="10" fill="#3a7090"/><rect x="8.4" y="1.5" width="4.7" height="21" fill="#0f6d9a"/><path d="M16.5 6.5 L21 5.5 L18 18 L16 16 Z" fill="#e05012"/><circle cx="27.8" cy="21.7" r="10.3" fill="#0f6d9a"/><path d="M27.8 21.7 L32.5 12.5 Q38 15.5 38 22 Q37.5 28 34.5 29.5 Z" fill="#e05012"/><path d="M27.8 21.7 L27.8 11.4 Q30.5 11.5 32.5 12.5 Z" fill="#3a7090"/><path d="M27.8 21.7 L32.5 12.5 M27.8 21.7 L34.5 29.5 M27.8 21.7 L27.8 11.4" stroke="#fff" stroke-width="0.8"/></svg>
<div class="a" style="left:2314px;top:104px;width:2px;height:41px;background:#c8c8c8"></div>
<svg class="a" style="left:2327px;top:105px" width="38" height="39" viewBox="0 0 38 39"><path d="M10 35 L10 4 Q10 1.5 13 1.5 L34 1.5 Q36.5 2 35.5 5.5 L32.5 5.5 L32.5 35 Q32 38 29 37.5" fill="none" stroke="#2a80ae" stroke-width="1.8"/><path d="M30 1.5 Q36.5 1 36 5.5 L31.5 5.5 Z" fill="#0f6d9a"/><path d="M1 32.5 L24 32.5 Q26.5 33 27 35.5 Q27.5 37.5 30 37.5 L5 37.5 Q1 37.5 1 32.5 Z" fill="#0f6d9a"/><path d="M14 13 L19.5 16.8 L14 20.5" fill="none" stroke="#e46a3a" stroke-width="1.8"/><rect x="20.5" y="20.3" width="6" height="1.8" fill="#e46a3a"/></svg>
<svg class="a" style="left:2381px;top:121.4px" width="11.5" height="6" viewBox="0 0 11.5 6"><path d="M0 0 L11.5 0 L5.75 6 Z" fill="#b4b4b4"/></svg>
<svg class="a" style="left:2403px;top:105px" width="38" height="38" viewBox="0 0 38 38"><path d="M36.57 15.07 L36.57 22.93 L31.35 23.65 L31.02 24.45 L34.20 28.64 L28.64 34.20 L24.45 31.02 L23.65 31.35 L22.93 36.57 L15.07 36.57 L14.35 31.35 L13.55 31.02 L9.36 34.20 L3.80 28.64 L6.98 24.45 L6.65 23.65 L1.43 22.93 L1.43 15.07 L6.65 14.35 L6.98 13.55 L3.80 9.36 L9.36 3.80 L13.55 6.98 L14.35 6.65 L15.07 1.43 L22.93 1.43 L23.65 6.65 L24.45 6.98 L28.64 3.80 L34.20 9.36 L31.02 13.55 L31.35 14.35 Z" fill="#0f6d9a" stroke="#0f6d9a" stroke-width="1" stroke-linejoin="round"/><circle cx="19" cy="19" r="6.5" fill="#fff"/></svg>
<div class="a" style="left:2449px;top:104px;width:2px;height:41px;background:#c8c8c8"></div>
<svg class="a" style="left:2462px;top:108px" width="38" height="31" viewBox="0 0 38 31"><path d="M12.8 9 L12.8 2.2 L35.5 2.2 L35.5 21 L26 21" fill="none" stroke="#1f76a4" stroke-width="2.6"/><path d="M10 14.5 L2.5 14.5 L2.5 28.3 L19.5 28.3 L19.5 23" fill="none" stroke="#1a98d2" stroke-width="2.6"/><path d="M12 22 L22 13" stroke="#e05012" stroke-width="3.6"/><path d="M18.5 9 L27 8 L25.5 16.5 Z" fill="#e05012"/></svg>
<div class="a" style="left:2508px;top:104px;width:2px;height:41px;background:#c8c8c8"></div>
<svg class="a" style="left:2521px;top:106px" width="38" height="37" viewBox="0 0 38 37"><rect x="1.7" y="1.7" width="33" height="27" fill="none" stroke="#0f6d9a" stroke-width="3"/><rect x="3.5" y="33.4" width="30" height="2.8" fill="#0f6d9a"/><path d="M8 22 A10.5 10.5 0 0 1 28.5 22" fill="none" stroke="#2a7aa4" stroke-width="2.2" stroke-dasharray="2.5 1.5"/><path d="M29.5 22 L26 22 Q25.5 18 24 16 L26.5 14 Q29.5 17.5 29.5 22 Z" fill="#0f6d9a"/><path d="M17 22 L21 7 L19.5 22 Z" fill="#e05012"/></svg>


<!-- viewport -->
<div class="a" id="vp"></div>
<!--BOTTLE-->
<svg class="a" style="left:1850px;top:450px" width="650" height="1200" viewBox="1850 450 650 1200">
<defs>
<linearGradient id="bodyg" x1="1986" y1="0" x2="2457" y2="0" gradientUnits="userSpaceOnUse">
<stop offset="0" stop-color="#5000b0"/><stop offset="0.05" stop-color="#5600ba"/><stop offset="0.3" stop-color="#6000c8"/>
<stop offset="0.42" stop-color="#7010d8"/><stop offset="0.5" stop-color="#8a28ec"/><stop offset="0.56" stop-color="#a040fa"/>
<stop offset="0.64" stop-color="#a444fc"/><stop offset="0.7" stop-color="#9434f2"/><stop offset="0.76" stop-color="#7a18e0"/><stop offset="0.82" stop-color="#6202cc"/><stop offset="0.95" stop-color="#5a00c0"/><stop offset="1" stop-color="#5400b8"/>
</linearGradient>
<linearGradient id="lowg" x1="1986" y1="0" x2="2457" y2="0" gradientUnits="userSpaceOnUse">
<stop offset="0" stop-color="#5000b0"/><stop offset="0.06" stop-color="#5600ba"/><stop offset="0.4" stop-color="#5e00c6"/>
<stop offset="0.7" stop-color="#6402cc"/><stop offset="0.93" stop-color="#5c00c4"/><stop offset="1" stop-color="#5400b8"/>
</linearGradient>
<radialGradient id="ribg" cx="0.62" cy="0.78" r="0.6" fx="0.62" fy="0.8">
<stop offset="0" stop-color="#a448f8"/><stop offset="0.35" stop-color="#8e2cee"/><stop offset="0.75" stop-color="#6e08d6" stop-opacity="0.6"/><stop offset="1" stop-color="#6000c8" stop-opacity="0"/>
</radialGradient>
<linearGradient id="capg" x1="2002" y1="0" x2="2390" y2="0" gradientUnits="userSpaceOnUse">
<stop offset="0" stop-color="#3c3c3c"/><stop offset="0.38" stop-color="#474747"/><stop offset="0.47" stop-color="#525252"/>
<stop offset="0.57" stop-color="#7a7a7a"/><stop offset="0.65" stop-color="#9a9a9a"/><stop offset="0.71" stop-color="#8a8a8a"/>
<stop offset="0.79" stop-color="#4c4c4c"/><stop offset="1" stop-color="#3c3c3c"/>
</linearGradient>
<linearGradient id="balg" x1="2100" y1="520" x2="2420" y2="700" gradientUnits="userSpaceOnUse">
<stop offset="0" stop-color="#da7cae"/><stop offset="0.35" stop-color="#d470a4"/><stop offset="0.7" stop-color="#c4649a"/><stop offset="1" stop-color="#a85884"/>
</linearGradient>
<linearGradient id="balv" x1="0" y1="470" x2="0" y2="800" gradientUnits="userSpaceOnUse">
<stop offset="0" stop-color="#b85a8c" stop-opacity="0.5"/><stop offset="0.25" stop-color="#b85a8c" stop-opacity="0"/><stop offset="0.7" stop-color="#b45a8a" stop-opacity="0"/><stop offset="1" stop-color="#b45a8a" stop-opacity="0.6"/>
</linearGradient>
<radialGradient id="hl" cx="0.5" cy="0.5" r="0.5">
<stop offset="0" stop-color="#ffb4ec"/><stop offset="0.35" stop-color="#ff98d4" stop-opacity="0.85"/><stop offset="1" stop-color="#e080b8" stop-opacity="0"/>
</radialGradient>
<radialGradient id="lbl" cx="0.5" cy="0.3" r="0.7">
<stop offset="0" stop-color="#ffffff" stop-opacity="0.07"/><stop offset="1" stop-color="#ffffff" stop-opacity="0.03"/>
</radialGradient>
<clipPath id="bodyclip"><path id="bodyp" d="M2003 878 C1992 930 1985 1040 1986 1140 C1987 1250 2005 1420 2012 1480 C2020 1550 2026 1600 2030 1650 L2458 1650 L2457 1631 C2455 1580 2454 1530 2453.5 1505 C2451 1400 2449 1300 2447 1242 C2446 1200 2444 1170 2442 1148 C2439 1110 2436 1080 2432.5 1054 C2428 1010 2424 985 2418 960 C2410 925 2400 890 2390 858 Z"/></clipPath>
</defs>
<path d="M2003 878 C1992 930 1985 1040 1986 1140 C1987 1250 2005 1420 2012 1480 C2020 1550 2026 1600 2030 1650 L2458 1650 L2457 1631 C2455 1580 2454 1530 2453.5 1505 C2451 1400 2449 1300 2447 1242 C2446 1200 2444 1170 2442 1148 C2439 1110 2436 1080 2432.5 1054 C2428 1010 2424 985 2418 960 C2410 925 2400 890 2390 858 Z" fill="url(#lowg)"/>
<g clip-path="url(#bodyclip)">
<path d="M1980 860 L2470 860 L2470 1180 L2445 1190 C2420 1210 2400 1222 2393 1225 C2370 1245 2355 1255 2344 1261 C2310 1272 2290 1280 2263 1284 C2220 1292 2180 1297 2140 1300 L1980 1310 Z" fill="url(#bodyg)"/>
<path d="M2140 1300 C2180 1297 2220 1292 2263 1284 C2290 1280 2310 1272 2344 1261 C2355 1255 2370 1245 2393 1225 C2400 1222 2420 1210 2445 1190" fill="none" stroke="#6a08d0" stroke-width="3" opacity="0.7"/>
<path d="M2122 981 L2296 981 L2296 1110 Q2296 1150 2210 1153 Q2124 1150 2124 1110 Z" fill="#ffffff" opacity="0.03"/>
<defs><radialGradient id="ribg3" cx="0.5" cy="0.5" r="0.5"><stop offset="0" stop-color="#a84cfa"/><stop offset="0.4" stop-color="#9232f0"/><stop offset="0.75" stop-color="#7412dc" stop-opacity="0.75"/><stop offset="1" stop-color="#6400cc" stop-opacity="0"/></radialGradient>
<clipPath id="ribc0"><path d="M2100 1200 L2470 1100 L2470 1270 C2440 1290 2400 1320 2344 1350 C2300 1370 2250 1383 2207 1383 C2172 1383 2142 1365 2134 1335 C2130 1320 2120 1260 2100 1200 Z"/></clipPath>
<clipPath id="ribc1"><path d="M2100 1288 L2470 1188 L2470 1358 C2440 1378 2400 1408 2344 1438 C2300 1458 2250 1471 2207 1471 C2172 1471 2142 1453 2134 1423 C2130 1408 2120 1348 2100 1288 Z"/></clipPath>
<clipPath id="ribc2"><path d="M2100 1376 L2470 1276 L2470 1446 C2440 1466 2400 1496 2344 1526 C2300 1546 2250 1559 2207 1559 C2172 1559 2142 1541 2134 1511 C2130 1496 2120 1436 2100 1376 Z"/></clipPath>
<clipPath id="ribc3"><path d="M2100 1464 L2470 1364 L2470 1534 C2440 1554 2400 1584 2344 1614 C2300 1634 2250 1647 2207 1647 C2172 1647 2142 1629 2134 1599 C2130 1584 2120 1524 2100 1464 Z"/></clipPath>
</defs>
<g clip-path="url(#ribc0)"><ellipse cx="2282" cy="1336" rx="185" ry="60" transform="rotate(-15 2282 1336)" fill="url(#ribg3)"/></g>
<path d="M2175 1381 C2190 1383 2200 1383.5 2207 1383.5 C2250 1383.5 2300 1370 2344 1350 C2380 1332 2400 1320 2410 1313" fill="none" stroke="#5a00c0" stroke-width="3" opacity="0.3"/>
<g clip-path="url(#ribc1)"><ellipse cx="2282" cy="1424" rx="185" ry="60" transform="rotate(-15 2282 1424)" fill="url(#ribg3)"/></g>
<path d="M2175 1469 C2190 1471 2200 1471.5 2207 1471.5 C2250 1471.5 2300 1458 2344 1438 C2380 1420 2400 1408 2410 1401" fill="none" stroke="#5a00c0" stroke-width="3" opacity="0.3"/>
<g clip-path="url(#ribc2)"><ellipse cx="2282" cy="1512" rx="185" ry="60" transform="rotate(-15 2282 1512)" fill="url(#ribg3)"/></g>
<path d="M2175 1557 C2190 1559 2200 1559.5 2207 1559.5 C2250 1559.5 2300 1546 2344 1526 C2380 1508 2400 1496 2410 1489" fill="none" stroke="#5a00c0" stroke-width="3" opacity="0.3"/>
<g clip-path="url(#ribc3)"><ellipse cx="2282" cy="1600" rx="185" ry="60" transform="rotate(-15 2282 1600)" fill="url(#ribg3)"/></g>
<path d="M2175 1645 C2190 1647 2200 1647.5 2207 1647.5 C2250 1647.5 2300 1634 2344 1614 C2380 1596 2400 1584 2410 1577" fill="none" stroke="#5a00c0" stroke-width="3" opacity="0.3"/>
<defs><linearGradient id="bandg" x1="2000" y1="0" x2="2400" y2="0" gradientUnits="userSpaceOnUse"><stop offset="0" stop-color="#9048ee" stop-opacity="0.9"/><stop offset="0.5" stop-color="#9048ee" stop-opacity="0.7"/><stop offset="1" stop-color="#9048ee" stop-opacity="0.15"/></linearGradient></defs>
<path d="M2003 891 C2012 946 2090 984.5 2195 984.5 C2300 983.5 2390 938 2393 868" fill="none" stroke="url(#bandg)" stroke-width="4"/>
</g>
<path d="M2003 878 C1992 930 1985 1040 1986 1140 C1987 1250 2005 1420 2012 1480 C2020 1550 2026 1600 2030 1650" fill="none" stroke="#4a00a8" stroke-width="3" opacity="0.6"/>
<path d="M1875 763 C1875 738 1912 722.7 1953 722.7 C1990 722.7 2011.8 738 2011.8 753 L2011.8 764 L2019.5 770 L2011 813 L1978.8 798.4 Q1970 795.5 1961 796 C1950 797.5 1942 798.4 1934 798.4 C1900 798.4 1875 785 1875 763 Z M1909.7 763.3 A34.6 13.8 -5 1 1 1978.7 757.3 A34.6 13.8 -5 1 1 1909.7 763.3 Z" fill="#030303" fill-rule="evenodd"/>
<path d="M1918 750 Q1945 734 1977 746" fill="none" stroke="#2e2e2e" stroke-width="1.4"/>
<path d="M1879 775 C1890 788 1915 795 1945 795.5 C1955 795.5 1960 793 1965 792.5 C1972 792 1985 800 2010 810" fill="none" stroke="#262626" stroke-width="1.3"/>
<path d="M2036 702 L2104 666 L2200 630 L2300 650 L2352 724 L2390 862 C2385 930 2300 977 2195 977 C2090 977 2008 935 2002 880 L2028 730 Z" fill="url(#capg)"/>
<path d="M2034 732 C2045 755 2080 780 2131 788 C2160 793 2180 795 2200 796 L2256 793 L2271 779 L2287 757 L2300 650 L2200 630 L2104 666 L2036 702 Z" fill="#3e3e3e"/>
<path d="M2034 733 C2045 755 2080 780 2131 788 C2160 793 2180 795 2205 796" fill="none" stroke="#8a8a8a" stroke-width="1.6"/>
<path d="M2390 862 C2385 930 2300 977 2195 977 C2090 977 2008 935 2002 880 C2010 940 2090 982 2195 982 C2300 981 2388 935 2391 866 Z" fill="#080808"/>
<path d="M2175 472 C2230 470 2290 471 2316 477 C2356 486 2390 515 2406 562 C2414 590 2412 620 2400 645 C2385 680 2366 704 2352 722 L2334 738 C2315 746 2300 752 2287 757 L2272 778 Q2262 795 2240 796 L2213 796 Q2193 794 2201 785 C2180 765 2152 742 2137 718 C2117 690 2102 662 2097 640 C2090 600 2092 560 2106 532 C2118 505 2135 480 2175 472 Z" fill="url(#balg)"/>
<path d="M2175 472 C2230 470 2290 471 2316 477 C2356 486 2390 515 2406 562 C2414 590 2412 620 2400 645 C2385 680 2366 704 2352 722 L2334 738 C2315 746 2300 752 2287 757 L2272 778 Q2262 795 2240 796 L2213 796 Q2193 794 2201 785 C2180 765 2152 742 2137 718 C2117 690 2102 662 2097 640 C2090 600 2092 560 2106 532 C2118 505 2135 480 2175 472 Z" fill="url(#balv)"/>
<defs><clipPath id="balclip"><path d="M2175 472 C2230 470 2290 471 2316 477 C2356 486 2390 515 2406 562 C2414 590 2412 620 2400 645 C2385 680 2366 704 2352 722 L2334 738 C2315 746 2300 752 2287 757 L2272 778 Q2262 795 2240 796 L2213 796 Q2193 794 2201 785 C2180 765 2152 742 2137 718 C2117 690 2102 662 2097 640 C2090 600 2092 560 2106 532 C2118 505 2135 480 2175 472 Z"/></clipPath><linearGradient id="balr" x1="2290" y1="560" x2="2412" y2="520" gradientUnits="userSpaceOnUse"><stop offset="0" stop-color="#9a4c7a" stop-opacity="0"/><stop offset="1" stop-color="#9a4c7a" stop-opacity="0.55"/></linearGradient><radialGradient id="ball" cx="0.5" cy="0.5" r="0.5"><stop offset="0" stop-color="#f0a0cc" stop-opacity="0.55"/><stop offset="1" stop-color="#f0a0cc" stop-opacity="0"/></radialGradient></defs>
<g clip-path="url(#balclip)">
<rect x="2280" y="460" width="140" height="340" fill="url(#balr)"/>
<ellipse cx="2150" cy="580" rx="70" ry="60" fill="url(#ball)"/>
<ellipse cx="2238" cy="548" rx="64" ry="58" fill="url(#hl)"/>
<ellipse cx="2320" cy="628" rx="66" ry="62" fill="url(#hl)"/>
</g>
<path d="M2197 793 Q2199 811 2215 814 L2272 803 L2267 784 L2256 793 Q2240 797 2223 798 Q2205 798 2197 793 Z" fill="#3a3a3a"/>
<path d="M2218 799 Q2240 800 2259 795.5 L2261 803 Q2240 806 2222 805 Z" fill="#a2a2cc"/>
<path d="M2240 1558 L2223 1620 A19 10 0 0 0 2261 1620 Z" fill="#ffff00"/>
<text x="2243" y="1570" font-family="Liberation Sans" font-size="14" fill="#fff">Z</text>
</svg>

<!--/BOTTLE-->
<svg class="a" style="left:740px;top:1926px" width="280" height="50" viewBox="740 1926 280 50">
<path d="M782.4 1931 L816 1931 L811 1935.5 L810.5 1947.5 Q808 1951.5 803 1951 L782.4 1944 Z" fill="#e41010"/>
<path d="M786 1933 L803 1932 L808 1944 L790 1940 Z" fill="#ff3030" opacity="0.6"/>
<path d="M762 1937 L775 1960 M775 1937 L762 1960" stroke="#f01010" stroke-width="1.3"/>
<path d="M937 1931 L968 1931 L946 1941.5 Q940 1941 938.5 1937 Z" fill="#00c000"/>
<rect x="999.8" y="1931" width="2" height="12.5" fill="#10e010"/><rect x="998" y="1931" width="3" height="1.5" fill="#10e010"/>
</svg>

<!-- errors -->
<div class="a" id="err"><div class="a" id="errt"></div></div>
<div class="a t" style="left:538px;top:1643.4px;font-size:22px;color:#fff;letter-spacing:-0.6px">Errors/Warnings</div>
<div class="a" style="left:545px;top:1684px;width:98px;height:32px;background:#41ade0"></div>
<div class="a" style="left:654px;top:1684px;width:127px;height:32px;background:#41ade0"></div>
<div class="a t" style="left:562px;top:1692.8px;font-size:18px;letter-spacing:-0.2px">0 Errors</div>
<div class="a t" style="left:672px;top:1692.8px;font-size:18px;letter-spacing:0.15px">3 Warnings</div>
<div class="a" style="left:789px;top:1681px;width:345px;height:38px;border:2px solid #d4d4d4"></div>
<div class="a t" style="left:796px;top:1689.8px;font-size:18px;font-style:italic;color:#a8a8a8;letter-spacing:-0.5px">Search...</div>
<svg class="a" style="left:1104px;top:1689px" width="22" height="22" viewBox="0 0 22 22"><circle cx="8.5" cy="8.5" r="6" fill="none" stroke="#1e8fc8" stroke-width="2.6"/><path d="M13 13 L19.5 19.5" stroke="#1e8fc8" stroke-width="3.6" stroke-linecap="round"/></svg>
<div class="a" style="left:542px;top:1735px;width:2200px;height:132px;border:2px solid #cfcfcf;border-right:none"></div>
<div class="a" style="left:650px;top:1736px;width:2px;height:36px;background:#d0d0d0"></div>
<div class="a" style="left:755px;top:1736px;width:2px;height:36px;background:#d0d0d0"></div>
<div class="a" style="left:1297px;top:1736px;width:2px;height:36px;background:#d0d0d0"></div>
<div class="a" style="left:1507px;top:1736px;width:2px;height:36px;background:#d0d0d0"></div>
<div class="a" style="left:544px;top:1805px;width:2200px;height:30px;background:#dfdfdf"></div>
<div class="a t" style="left:556px;top:1748.4px;font-size:19px;font-weight:bold;transform:scaleX(.86);transform-origin:0 0">TYPE</div>
<div class="a t" style="left:661px;top:1748.4px;font-size:19px;font-weight:bold;transform:scaleX(.86);transform-origin:0 0">CODE</div>
<div class="a t" style="left:767px;top:1748.4px;font-size:19px;font-weight:bold;transform:scaleX(.86);transform-origin:0 0">DESCRIPTION</div>
<div class="a t" style="left:1310px;top:1748.4px;font-size:19px;font-weight:bold;transform:scaleX(.915);transform-origin:0 0">DATE AND TIME</div>
<div class="a t" style="left:551px;top:1781.4px;font-size:19px;letter-spacing:-0.5px">Warning</div>
<div class="a t" style="left:657px;top:1781.4px;font-size:19px;letter-spacing:-0.95px">Exchange</div>
<div class="a t" style="left:1304px;top:1778.9px;font-size:19px;letter-spacing:-0.5px">24/06/2025 09:39:42</div>
<div class="a t" style="left:551px;top:1811.4px;font-size:19px;letter-spacing:-0.5px">Warning</div>
<div class="a t" style="left:657px;top:1811.4px;font-size:19px;letter-spacing:-0.95px">Exchange</div>
<div class="a t" style="left:1304px;top:1808.9px;font-size:19px;letter-spacing:-0.5px">24/06/2025 09:39:42</div>
<div class="a t" style="left:551px;top:1841.4px;font-size:19px;letter-spacing:-0.5px">Warning</div>
<div class="a t" style="left:657px;top:1841.4px;font-size:19px;letter-spacing:-0.95px">Exchange</div>
<div class="a t" style="left:1304px;top:1838.9px;font-size:19px;letter-spacing:-0.5px">24/06/2025 09:39:42</div>

</body></html>
